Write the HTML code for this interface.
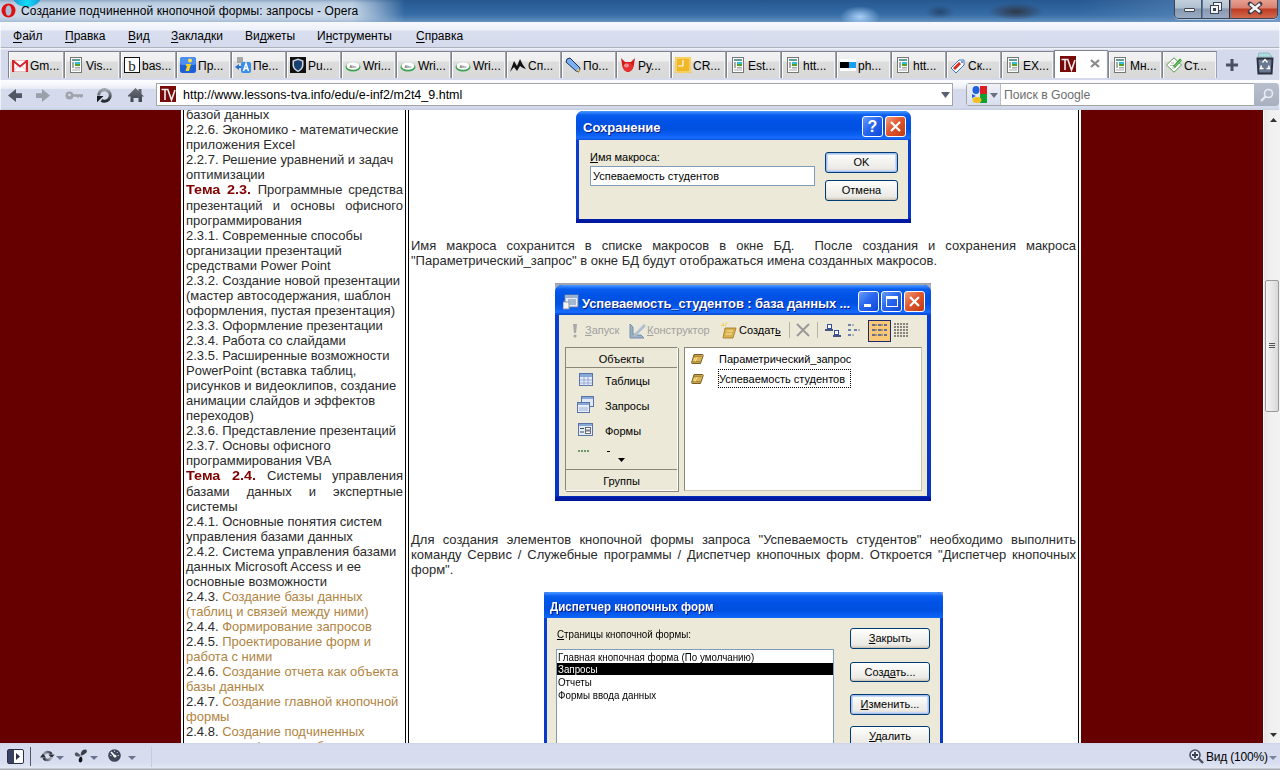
<!DOCTYPE html>
<html><head><meta charset="utf-8">
<style>
*{margin:0;padding:0;box-sizing:border-box}
html,body{width:1280px;height:770px;overflow:hidden;background:#fff;font-family:"Liberation Sans",sans-serif}
.a{position:absolute}
#title{left:0;top:0;width:1280px;height:22px;background:linear-gradient(#275890 0,#3066a0 10px,#386ea6 15px,#4a7cb0 18px,#5e8cbc 21px,#6a94c0 22px);overflow:hidden}
#menubar{left:0;top:22px;width:1280px;height:25px;background:linear-gradient(#f6f8fc 0,#eef1f9 8px,#d9dfef 9px,#d5dbec 25px)}
#menuline{left:0;top:47px;width:1280px;height:1px;background:#adb2bc}
#tabstrip{left:0;top:48px;width:1280px;height:32px;background:linear-gradient(#eef1f8 0,#eef1f8 1px,#d4daeb 2px,#d4daeb 32px)}
#addrrow{left:0;top:80px;width:1280px;height:25px;background:linear-gradient(#fdfdff 0,#f2f4fa 6px,#e8ecf6 8.5px,#d5dbec 9.5px,#d5dbec 25px)}
#addrline{left:0;top:22px;width:1280px;height:88px;border-left:1px solid rgba(255,255,255,.6);border-right:1px solid rgba(255,255,255,.6)}
#addrbot{left:0;top:105px;width:1280px;height:5px;background:linear-gradient(#d5dbec 0,#d3daec 3px,#c9d0e2 4px)}
.menu{font-size:12px;color:#000;top:7px;white-space:nowrap}
.menu u{text-decoration:underline;text-underline-offset:2px}
.tab{top:51px;height:27px;border-left:1px solid #7d828c;border-right:1px solid #a0a4ae;border-top:1px solid #7d828c;background:linear-gradient(#f3f3f3 0,#eeeeee 9px,#dddddd 10px,#d8d8d8 26px);font-size:12px;color:#000;box-shadow:inset 1px 0 0 #fff, inset -1px 0 0 #f4f4f4}
.tab.act{background:#fff;top:50px;height:28px}
.tab span{position:absolute;left:21px;top:7px;white-space:nowrap}
.tic{position:absolute;left:3px;top:5px;width:16px;height:16px}
.tic svg{display:block}
#content{left:0;top:110px;width:1263px;height:633px;background:#fff;overflow:hidden}
.maroon{background:#660000}
.side{left:186px;width:217px;font-size:13px;line-height:15px;color:#2a2a2a;white-space:nowrap}
.j{text-align:justify;text-align-last:justify}
.lk{color:#b0843f}
.tm{display:inline-block;color:#800000;font-weight:bold;font-size:12px;transform:scaleX(1.2);transform-origin:0 50%;text-align:left;text-align-last:left}
.para{left:411px;width:665px;font-size:13px;line-height:15px;color:#2a2a2a;white-space:nowrap}
#status{left:0;top:743px;width:1280px;height:27px;background:linear-gradient(#cdd4e8 0,#d6dcee 2px,#d8def0 20px,#e4e8f4 25px,#a8acb4 26px)}
#scroll{left:1264px;top:110px;width:16px;height:633px;background:linear-gradient(90deg,#e6e6e6,#f0f0f0 40%,#f2f2f2)}
.xpwin{overflow:hidden;background:linear-gradient(0deg,#00149a 0,#001ca8 4px,#0636c8 5px,#0a40d4 100%)}
.xptitle{background:linear-gradient(#4a9aff 0,#2a7cfc 2px,#0a5eee 4px,#0053e6 10px,#0050e0 18px,#0a60f4 24px,#1a6cfc 27px,#0a50dc 29px,#0a4ad8 100%)}
.xpclient{background:#ece9d8}
.xptt{font:bold 13px/15px "Liberation Sans",sans-serif;color:#fff;white-space:nowrap;text-shadow:1px 1px 0 #0a1a80}
.xptxt{font:11px/13px "Liberation Sans",sans-serif;color:#000;white-space:nowrap}
.xptxt.dis{color:#a0a0a0}
.xpedit{background:#fff;border:1px solid #7f9db9}
.xpbtn{border:1px solid #003c74;border-radius:3px;background:linear-gradient(#fff 0,#f4f4f0 40%,#ecebe6 80%,#d8d4c8 100%);font:11px "Liberation Sans",sans-serif;text-align:center;color:#000;box-shadow:inset 0 -1px 1px #c8c4b4}
.xpbtn.foc{box-shadow:inset 0 0 0 1px #a8c0f0,inset 0 0 0 2px #c8d8f8}
.xpclose{border:1px solid #fff;border-radius:3px;background:linear-gradient(135deg,#f0a080,#e05830 45%,#c03810)}
.xpblue{border:1px solid #fff;border-radius:3px;background:linear-gradient(135deg,#6a9cf8,#2a68f0 45%,#1048d8)}
.sx{transform:scaleX(0.89);transform-origin:0 0}

</style></head><body>

<div id="title" class="a">
 <div class="a" style="left:0;top:0;width:420px;height:22px;background:linear-gradient(#90a8c6 0,#b8cce0 3px,#c4d4e6 7px,#c8d7e7 16px,#b8cadf 20px,#a4bad2 22px);-webkit-mask-image:linear-gradient(90deg,#000 0,#000 352px,rgba(0,0,0,.6) 375px,rgba(0,0,0,0) 405px);mask-image:linear-gradient(90deg,#000 0,#000 352px,rgba(0,0,0,.6) 375px,rgba(0,0,0,0) 405px)"></div>
 <div class="a" style="left:12px;top:-19px;width:30px;height:26px;border-radius:50%;background:radial-gradient(circle at 50% 85%,#10e0f8,#1aa0d8 45%,#1a78b8 85%,#1a5888)"></div>
 <div class="a" style="left:840px;top:6px;width:40px;height:22px;border-radius:50%;background:radial-gradient(#a8d0f8,rgba(120,170,230,0) 70%)"></div>
 <div class="a" style="left:1080px;top:0;width:200px;height:22px;background:linear-gradient(90deg,rgba(110,150,195,0),rgba(110,150,195,.55) 70%,rgba(120,160,200,.7))"></div>
 <div class="a" style="left:988px;top:3px;width:56px;height:17px;border-radius:50%;background:radial-gradient(#303848,rgba(40,55,80,0) 70%)"></div>
 <div class="a" style="left:925px;top:5px;width:30px;height:14px;border-radius:50%;background:radial-gradient(rgba(30,50,80,.6),rgba(40,55,80,0) 70%)"></div>
 <svg class="a" style="left:1px;top:3px" width="15" height="15"><ellipse cx="7.5" cy="7.5" rx="7" ry="7" fill="#e01010"/><ellipse cx="7.5" cy="7.5" rx="3" ry="5.2" fill="#a8c0d8"/></svg>
 <div class="a" style="left:21px;top:4px;font-size:12px;letter-spacing:0.1px;color:#000;white-space:nowrap">Создание подчиненной кнопочной формы: запросы - Opera</div>
 <div class="a" style="left:1174px;top:0;width:104px;height:19px;border:1px solid #3a4452;border-top:none;border-radius:0 0 5px 5px;overflow:hidden;box-shadow:0 1px 0 rgba(255,255,255,.5)">
  <div class="a" style="left:0;top:0;width:27px;height:18px;background:linear-gradient(#c4d0dc,#b0c0d0 8px,#8898b0 9px,#9aacc4 18px);border-right:1px solid #4a5462"></div>
  <div class="a" style="left:28px;top:0;width:27px;height:18px;background:linear-gradient(#c4d0dc,#b0c0d0 8px,#8898b0 9px,#9aacc4 18px);border-right:1px solid #5a1a10"></div>
  <div class="a" style="left:56px;top:0;width:48px;height:18px;background:linear-gradient(#e8a090,#d88070 8px,#c03a20 9px,#d06a50 18px)"></div>
  <div class="a" style="left:9px;top:8px;width:11px;height:4px;background:#f4f4f4;border:1px solid #3a4452;border-radius:1px"></div>
  <div class="a" style="left:38px;top:2px;width:9px;height:9px;background:#f4f4f4;border:1px solid #3a4452"></div>
  <div class="a" style="left:35px;top:5px;width:9px;height:9px;background:#f4f4f4;border:1px solid #3a4452"></div>
  <div class="a" style="left:38px;top:8px;width:3px;height:3px;background:#3a4452"></div>
  <svg class="a" style="left:72px;top:1px" width="16" height="14"><path d="M3 3 13 11M13 3 3 11" stroke="#3a3a48" stroke-width="4.6" stroke-linecap="round"/><path d="M3 3 13 11M13 3 3 11" stroke="#f4f4f4" stroke-width="2.6"/></svg>
 </div>
</div>
<div id="menubar" class="a">
 <div class="a menu" style="left:13px"><u>Ф</u>айл</div>
 <div class="a menu" style="left:65px"><u>П</u>равка</div>
 <div class="a menu" style="left:128px"><u>В</u>ид</div>
 <div class="a menu" style="left:171px"><u>З</u>акладки</div>
 <div class="a menu" style="left:245px">Ви<u>д</u>жеты</div>
 <div class="a menu" style="left:317px">И<u>н</u>струменты</div>
 <div class="a menu" style="left:416px"><u>С</u>правка</div>
</div>
<div id="menuline" class="a"></div>
<div id="tabstrip" class="a"></div>
<div class="a tab" style="left:8px;width:56px"><div class="tic"><svg width="16" height="16"><rect x="0.5" y="3.5" width="15" height="11" fill="#fff" stroke="#f0b0b0" stroke-width=".8"/><path d="M0 3h2.2v12H0zM13.8 3H16v12h-2.2z" fill="#d8242c"/><path d="M1 3.8 8 9.5 15 3.8" stroke="#d8242c" stroke-width="2" fill="none"/><path d="M2 13.5 6 9M14 13.5 10 9" stroke="#f4b0b0" stroke-width=".8"/></svg></div><span>Gm...</span></div>
<div class="a tab" style="left:64px;width:56px"><div class="tic"><svg width="16" height="16"><rect x="2.5" y="0.5" width="11" height="15" fill="#fff" stroke="#777"/><rect x="4" y="2" width="8" height="2" fill="#6a9a9a"/><rect x="4" y="5" width="2" height="6" fill="#aaa"/><rect x="7" y="5" width="5" height="3" fill="#2ec0e0"/><rect x="7" y="7" width="5" height="2" fill="#5aa020"/><rect x="7" y="10" width="5" height="1.5" fill="#aaa"/><rect x="4" y="12.5" width="8" height="1" fill="#aaa"/></svg></div><span>Vis...</span></div>
<div class="a tab" style="left:120px;width:56px"><div class="tic"><svg width="16" height="16"><rect x="0.5" y="0.5" width="15" height="15" fill="#fff" stroke="#111"/><text x="8" y="13.5" font-family="Liberation Serif" font-size="15" text-anchor="middle" fill="#222">b</text></svg></div><span>bas...</span></div>
<div class="a tab" style="left:176px;width:55px"><div class="tic"><svg width="16" height="16"><rect x="0" y="0" width="16" height="16" rx="2.5" fill="#1d5fd6"/><rect x="0" y="0" width="16" height="8" rx="2.5" fill="#4d8ef0"/><circle cx="10" cy="3.5" r="2" fill="#ffe23a"/><path d="M6 7h5l-2 7H5.5l1.5-5H6z" fill="#ffd21a"/></svg></div><span>Пр...</span></div>
<div class="a tab" style="left:231px;width:55px"><div class="tic"><svg width="16" height="16"><rect x="2" y="0" width="6" height="6" fill="#8a8a8a" opacity=".7"/><path d="M0 10l4-3v2h4v2H4v2z" fill="#2a70d0"/><rect x="6" y="5" width="10" height="11" rx="2" fill="#3a8ee8"/><path d="M8.5 14 11 6.5 13.5 14M9.5 11.5h3" stroke="#fff" stroke-width="1.5" fill="none"/></svg></div><span>Пе...</span></div>
<div class="a tab" style="left:286px;width:55px"><div class="tic"><svg width="16" height="16"><rect width="16" height="16" fill="#111"/><path d="M8 1.5 13.5 3.5V8c0 3.5-2.5 5.5-5.5 7-3-1.5-5.5-3.5-5.5-7V3.5z" fill="#cfd8e0"/><path d="M8 3 12 4.5V8c0 2.6-1.8 4.2-4 5.4C5.8 12.2 4 10.6 4 8V4.5z" fill="#1a4070"/></svg></div><span>Pu...</span></div>
<div class="a tab" style="left:341px;width:55px"><div class="tic"><svg width="16" height="16"><ellipse cx="8" cy="10" rx="7.5" ry="4.5" fill="#3aa050"/><ellipse cx="8" cy="9" rx="6.5" ry="3.8" fill="#fff"/><text x="8" y="10.5" font-family="Liberation Sans" font-size="4" text-anchor="middle" fill="#555">Abc</text></svg></div><span>Wri...</span></div>
<div class="a tab" style="left:396px;width:55px"><div class="tic"><svg width="16" height="16"><ellipse cx="8" cy="10" rx="7.5" ry="4.5" fill="#3aa050"/><ellipse cx="8" cy="9" rx="6.5" ry="3.8" fill="#fff"/><text x="8" y="10.5" font-family="Liberation Sans" font-size="4" text-anchor="middle" fill="#555">Abc</text></svg></div><span>Wri...</span></div>
<div class="a tab" style="left:451px;width:55px"><div class="tic"><svg width="16" height="16"><ellipse cx="8" cy="10" rx="7.5" ry="4.5" fill="#3aa050"/><ellipse cx="8" cy="9" rx="6.5" ry="3.8" fill="#fff"/><text x="8" y="10.5" font-family="Liberation Sans" font-size="4" text-anchor="middle" fill="#555">Abc</text></svg></div><span>Wri...</span></div>
<div class="a tab" style="left:506px;width:55px"><div class="tic"><svg width="16" height="16"><path d="M0 15 4 4 7 9 10 2 13 8 16 12 13 11 10 9 7 14 4 10z" fill="#111"/></svg></div><span>Сп...</span></div>
<div class="a tab" style="left:561px;width:55px"><div class="tic"><svg width="16" height="16"><path d="M2 2l3-1 10 10-1 4-3-1L1 5z" fill="#7ab0f0" stroke="#1a3060" stroke-width="1"/><path d="M11 14l4 1-1-4z" fill="#e8c070"/></svg></div><span>По...</span></div>
<div class="a tab" style="left:616px;width:55px"><div class="tic"><svg width="16" height="16"><path d="M1 1l4 4h6l4-4-1 6c0 4-3 8-6 8S2 11 2 7z" fill="#d01818"/><ellipse cx="8" cy="10" rx="5" ry="4.5" fill="#e83030"/><ellipse cx="6.5" cy="8.5" rx="2.5" ry="2" fill="#fff" opacity=".45"/></svg></div><span>Ру...</span></div>
<div class="a tab" style="left:671px;width:55px"><div class="tic"><svg width="16" height="16"><rect width="16" height="16" fill="#f0b828"/><rect x="1" y="1" width="14" height="14" fill="none" stroke="#fff2b0" stroke-width=".8"/><path d="M8 3v6M3 9h5" stroke="#fff" stroke-width="1.2" fill="none"/></svg></div><span>CR...</span></div>
<div class="a tab" style="left:726px;width:55px"><div class="tic"><svg width="16" height="16"><rect x="2.5" y="0.5" width="11" height="15" fill="#fff" stroke="#777"/><rect x="4" y="2" width="8" height="2" fill="#6a9a9a"/><rect x="4" y="5" width="2" height="6" fill="#aaa"/><rect x="7" y="5" width="5" height="3" fill="#2ec0e0"/><rect x="7" y="7" width="5" height="2" fill="#5aa020"/><rect x="7" y="10" width="5" height="1.5" fill="#aaa"/><rect x="4" y="12.5" width="8" height="1" fill="#aaa"/></svg></div><span>Est...</span></div>
<div class="a tab" style="left:781px;width:55px"><div class="tic"><svg width="16" height="16"><rect x="2.5" y="0.5" width="11" height="15" fill="#fff" stroke="#777"/><rect x="4" y="2" width="8" height="2" fill="#6a9a9a"/><rect x="4" y="5" width="2" height="6" fill="#aaa"/><rect x="7" y="5" width="5" height="3" fill="#2ec0e0"/><rect x="7" y="7" width="5" height="2" fill="#5aa020"/><rect x="7" y="10" width="5" height="1.5" fill="#aaa"/><rect x="4" y="12.5" width="8" height="1" fill="#aaa"/></svg></div><span>htt...</span></div>
<div class="a tab" style="left:836px;width:55px"><div class="tic"><svg width="16" height="16"><rect x="0" y="2" width="16" height="12" fill="#fff"/><rect x="0" y="5" width="9" height="6" fill="#000"/><rect x="9" y="5" width="7" height="6" fill="#1aa0f0"/></svg></div><span>ph...</span></div>
<div class="a tab" style="left:891px;width:55px"><div class="tic"><svg width="16" height="16"><rect x="2.5" y="0.5" width="11" height="15" fill="#fff" stroke="#777"/><rect x="4" y="2" width="8" height="2" fill="#6a9a9a"/><rect x="4" y="5" width="2" height="6" fill="#aaa"/><rect x="7" y="5" width="5" height="3" fill="#2ec0e0"/><rect x="7" y="7" width="5" height="2" fill="#5aa020"/><rect x="7" y="10" width="5" height="1.5" fill="#aaa"/><rect x="4" y="12.5" width="8" height="1" fill="#aaa"/></svg></div><span>htt...</span></div>
<div class="a tab" style="left:946px;width:55px"><div class="tic"><svg width="16" height="16"><path d="M1 11 9 3h5v5l-8 8z" fill="#fff" stroke="#3a78c8" stroke-width="1"/><path d="M3 11l6-6 2 2-6 6z" fill="#d82a1a"/><circle cx="12" cy="5" r="1" fill="#3a78c8"/></svg></div><span>Ск...</span></div>
<div class="a tab" style="left:1001px;width:53px"><div class="tic"><svg width="16" height="16"><rect x="2.5" y="0.5" width="11" height="15" fill="#fff" stroke="#777"/><rect x="4" y="2" width="8" height="2" fill="#6a9a9a"/><rect x="4" y="5" width="2" height="6" fill="#aaa"/><rect x="7" y="5" width="5" height="3" fill="#2ec0e0"/><rect x="7" y="7" width="5" height="2" fill="#5aa020"/><rect x="7" y="10" width="5" height="1.5" fill="#aaa"/><rect x="4" y="12.5" width="8" height="1" fill="#aaa"/></svg></div><span>EX...</span></div>
<div class="a tab act" style="left:1054px;width:54px"><div class="tic" style="left:5px"><svg width="16" height="16"><rect width="16" height="16" fill="#7a0a0a"/><path d="M1.5 3.5h7M5 3.5V14M8 4l3.5 10L15 4" stroke="#eee" stroke-width="1.6" fill="none"/></svg></div><svg class="a" style="left:35px;top:8px" width="10" height="9"><path d="M1 1 9 8M9 1 1 8" stroke="#8a8a8a" stroke-width="2.3"/></svg></div>
<div class="a tab" style="left:1108px;width:54px"><div class="tic"><svg width="16" height="16"><rect x="2.5" y="0.5" width="11" height="15" fill="#fff" stroke="#777"/><rect x="4" y="2" width="8" height="2" fill="#6a9a9a"/><rect x="4" y="5" width="2" height="6" fill="#aaa"/><rect x="7" y="5" width="5" height="3" fill="#2ec0e0"/><rect x="7" y="7" width="5" height="2" fill="#5aa020"/><rect x="7" y="10" width="5" height="1.5" fill="#aaa"/><rect x="4" y="12.5" width="8" height="1" fill="#aaa"/></svg></div><span>Мн...</span></div>
<div class="a tab" style="left:1162px;width:55px"><div class="tic"><svg width="16" height="16"><path d="M0.5 8 8 0.8 15.5 8 8 15.2z" fill="#fff" stroke="#5a9a50" stroke-width="1"/><path d="M4 8.5h4M5 6h3M6 11h3" stroke="#8aa080" stroke-width=".7"/><path d="M8 10 15 2.5" stroke="#2a8a30" stroke-width="2.6"/><path d="M8.5 9.5 15 3" stroke="#70d060" stroke-width="1.2"/></svg></div><span>Ст...</span></div>
<svg class="a" style="left:1226px;top:59px" width="12" height="12"><path d="M4.5 0h3v12h-3zM0 4.5h12v3H0z" fill="#4c5060"/></svg>
<svg class="a" style="left:1255px;top:52px" width="20" height="24"><path d="M4 1h10l3 4H3z" fill="#a8e0e0" stroke="#80a0a8" stroke-width=".6"/><path d="M1.5 5.5h17l-1 17h-15z" fill="#2a303c"/><path d="M3.5 7.5h13l-.8 13H4.3z" fill="#6a7890"/><path d="M7.5 10.5 10 7.5l2.5 3M13.5 13.5l1 3h-3M6.5 13.5l-1 3h3" stroke="#fff" stroke-width="1.4" fill="none"/></svg>
<div id="addrrow" class="a"></div>
<div id="addrbot" class="a"></div>
<svg class="a" style="left:8px;top:89px" width="15" height="14"><path d="M0 6.5 8 0v4.2h6v4.8H8V13z" fill="#535763"/></svg>
<svg class="a" style="left:36px;top:89px" width="15" height="14"><path d="M14 6.5 6 0v4.2H0v4.8h6V13z" fill="#9b9fa9"/></svg>
<svg class="a" style="left:65px;top:91px" width="19" height="10"><circle cx="4.5" cy="4.5" r="4" fill="#a0a3aa"/><circle cx="4.5" cy="4" r="1.3" fill="#d5dbec"/><path d="M8 3.2h10v2.6h-1l-1 1.5-1-1.5h-1l-1 1.5-1-1.5H8z" fill="#a0a3aa"/></svg>
<svg class="a" style="left:96px;top:88px" width="17" height="16"><defs><linearGradient id="rg" x1="0" y1="0" x2="0" y2="1"><stop offset="0" stop-color="#a0a4ae"/><stop offset="1" stop-color="#22262e"/></linearGradient></defs><path d="M2.6 7.4A5.8 5.8 0 1 1 5.4 12.4" stroke="url(#rg)" stroke-width="3" fill="none"/><path d="M1 8h6.5L1 14.2z" fill="#15181e"/></svg>
<svg class="a" style="left:128px;top:88px" width="16" height="14"><defs><linearGradient id="hg" x1="0" y1="0" x2="0" y2="1"><stop offset="0" stop-color="#6a6e78"/><stop offset="1" stop-color="#40444e"/></linearGradient></defs><path d="M0 7.5 7.5 0l3 3V1h3v5l2.5 2.5h-2V14H10.5v-4h-5v4H2.5V8.5H0z" fill="url(#hg)"/></svg>
<div class="a" style="left:156px;top:83px;width:797px;height:23px;background:#fff;border:1px solid #a5a5a5">
 <div class="tic" style="left:3px;top:2px"><svg width="16" height="16"><rect width="16" height="16" fill="#7a0a0a"/><path d="M1.5 3.5h7M5 3.5V14M8 4l3.5 10L15 4" stroke="#eee" stroke-width="1.6" fill="none"/></svg></div>
 <div class="a" style="left:26px;top:4px;font-size:12.5px;color:#000;white-space:nowrap">http://www.lessons-tva.info/edu/e-inf2/m2t4_9.html</div>
 <svg class="a" style="left:784px;top:8px" width="9" height="6"><path d="M0 0h9L4.5 6z" fill="#5a6070"/></svg>
</div>
<div class="a" style="left:966px;top:83px;width:289px;height:23px;background:#fff;border:1px solid #a5a5a5;border-radius:3px 0 0 3px">
 <div class="a" style="left:0;top:0;width:34px;height:21px;background:linear-gradient(#f0f2f8,#d8deee);border-right:1px solid #b8bcc8"></div>
 <svg class="a" style="left:4px;top:1px" width="18" height="19"><path d="M9 1h7v10H9z" fill="#e02020"/><path d="M9 9h7v9H9z" fill="#10a030"/><ellipse cx="5" cy="5" rx="3.5" ry="4" fill="#2060e0"/><ellipse cx="6" cy="15" rx="4.5" ry="3" fill="#f0c020"/><path d="M1 9l4 2-4 2z" fill="#2060e0"/></svg>
 <svg class="a" style="left:23px;top:9px" width="8" height="5"><path d="M0 0h8L4 5z" fill="#6a7080"/></svg>
 <div class="a" style="left:37px;top:4px;font-size:12.2px;color:#6d6d6d;white-space:nowrap">Поиск в Google</div>
</div>
<div class="a" style="left:1254px;top:83px;width:25px;height:23px;background:linear-gradient(#b8bfcc,#a8b0c0);border-radius:0 4px 4px 0">
 <svg class="a" style="left:6px;top:5px" width="14" height="14"><circle cx="8.5" cy="5.5" r="4" stroke="#e8ecf4" stroke-width="1.6" fill="none"/><path d="M5.5 8.5 1 13" stroke="#e8ecf4" stroke-width="2.2"/></svg>
</div>
<div id="addrline" class="a"></div>
<div id="status" class="a">
 <svg class="a" style="left:7px;top:6px" width="17" height="15"><rect x="0.5" y="0.5" width="16" height="14" rx="1.5" fill="#fff" stroke="#2a3048"/><rect x="1" y="1" width="6" height="13" fill="#3a4060"/><path d="M9 4v7l4-3.5z" fill="#2a3048"/></svg>
 <div class="a" style="left:30px;top:4px;width:1px;height:19px;background:#50586a"></div>
 <svg class="a" style="left:39px;top:6px" width="17" height="14"><defs><linearGradient id="sg1" x1="0" y1="0" x2="1" y2="0"><stop offset="0" stop-color="#a8acb8"/><stop offset="1" stop-color="#2a2e3a"/></linearGradient><linearGradient id="sg2" x1="1" y1="0" x2="0" y2="0"><stop offset="0" stop-color="#b0b4c0"/><stop offset="1" stop-color="#2a2e3a"/></linearGradient></defs><path d="M4.5 6A4.5 4.5 0 0 1 12.5 5" stroke="url(#sg1)" stroke-width="2.6" fill="none"/><path d="M9.5 5.5h6l-3 4z" fill="#2a2e3a"/><path d="M12.5 8A4.5 4.5 0 0 1 4.5 9" stroke="url(#sg2)" stroke-width="2.6" fill="none"/><path d="M1 8.5h6l-3-4z" fill="#2a2e3a"/></svg>
 <svg class="a" style="left:56px;top:13px" width="8" height="5"><path d="M0 0h8L4 4z" fill="#6a7490"/></svg>
 <svg class="a" style="left:74px;top:6px" width="14" height="14"><path d="M7 7C6 4 8 0.5 11 0.5c2 0 2.5 2 1 3.5C11 5 9 6 7 7z" fill="#3a3e48"/><path d="M7 7C5 8 1.5 8 0.8 5.5 0.5 3.5 2.5 3 4 4c1 .8 2.5 2 3 3z" fill="#50545e"/><path d="M7 7c1.5 1.5 2 4.5 0.5 6-1.5 1-3 0-2.8-2C4.8 9.5 6 8 7 7z" fill="#101218"/><circle cx="7" cy="7" r="1.3" fill="#9aa0ac"/></svg>
 <svg class="a" style="left:90px;top:13px" width="8" height="5"><path d="M0 0h8L4 4z" fill="#6a7490"/></svg>
 <svg class="a" style="left:108px;top:6px" width="13" height="13"><circle cx="6.5" cy="6.5" r="6.3" fill="#3e4658"/><path d="M6.5 1.5v1.5M2 6.5h1.5M11 6.5H9.5M9.8 3l-1 1" stroke="#b8c0d0" stroke-width="1"/><path d="M3 3l4.2 4.6" stroke="#fff" stroke-width="1.6"/><circle cx="7" cy="7.2" r="1.4" fill="#fff"/></svg>
 <svg class="a" style="left:128px;top:13px" width="8" height="5"><path d="M0 0h8L4 4z" fill="#6a7490"/></svg>
 <div class="a" style="left:151px;top:3px;width:1px;height:21px;background:#c8ccd8"></div>
 <svg class="a" style="left:1189px;top:6px" width="15" height="15"><circle cx="6" cy="6" r="5" fill="#e8ecf4" stroke="#4a5264" stroke-width="1.6"/><path d="M6 3v6M3 6h6" stroke="#3a4254" stroke-width="1.8"/><path d="M9.5 9.5 14 14" stroke="#4a5264" stroke-width="2.4"/></svg>
 <div class="a" style="left:1206px;top:7px;font-size:12px;letter-spacing:-0.2px;color:#000;white-space:nowrap">Вид (100%)</div>
 <svg class="a" style="left:1269px;top:13px" width="8" height="5"><path d="M0 0h8L4 4z" fill="#7a84a0"/></svg>
</div>
<div id="scroll" class="a">
 <svg class="a" style="left:6px;top:8px" width="7" height="4"><path d="M0 4 3.5 0 7 4z" fill="#333"/></svg>
 <div class="a" style="left:1px;top:170px;width:14px;height:132px;border:1px solid #9a9a9a;border-radius:2px;background:linear-gradient(90deg,#f4f4f4,#e8e8e8 50%,#d8d8d8)"></div>
 <div class="a" style="left:5px;top:233px;width:6px;height:1px;background:#555;box-shadow:0 2px 0 #555,0 4px 0 #555"></div>
 <svg class="a" style="left:6px;top:623px" width="7" height="4"><path d="M0 0h7L3.5 4z" fill="#333"/></svg>
</div>

<div id="content" class="a">
<div class="a maroon" style="left:0;top:0;width:181px;height:633px"></div>
<div class="a" style="left:183px;top:0;width:1px;height:633px;background:#000"></div>
<div class="a" style="left:405px;top:0;width:1px;height:633px;background:#000"></div>
<div class="a" style="left:408px;top:0;width:1px;height:633px;background:#000"></div>
<div class="a" style="left:1078px;top:0;width:1px;height:633px;background:#000"></div>
<div class="a maroon" style="left:1081px;top:0;width:182px;height:633px"></div>
<div class="a side" style="top:-3px">базой данных</div>
<div class="a side" style="top:12px">2.2.6. Экономико - математические</div>
<div class="a side" style="top:27px">приложения Excel</div>
<div class="a side" style="top:42px">2.2.7. Решение уравнений и задач</div>
<div class="a side" style="top:57px">оптимизации</div>
<div class="a side j" style="top:72px"><b class="tm" style="width:35px">Тема</b> <b class="tm" style="width:25px">2.3.</b> Программные средства</div>
<div class="a side j" style="top:88px">презентаций и основы офисного</div>
<div class="a side" style="top:103px">программирования</div>
<div class="a side" style="top:118px">2.3.1. Современные способы</div>
<div class="a side" style="top:133px">организации презентаций</div>
<div class="a side" style="top:148px">средствами Power Point</div>
<div class="a side" style="top:163px">2.3.2. Создание новой презентации</div>
<div class="a side" style="top:178px">(мастер автосодержания, шаблон</div>
<div class="a side" style="top:193px">оформления, пустая презентация)</div>
<div class="a side" style="top:208px">2.3.3. Оформление презентации</div>
<div class="a side" style="top:223px">2.3.4. Работа со слайдами</div>
<div class="a side" style="top:238px">2.3.5. Расширенные возможности</div>
<div class="a side" style="top:253px">PowerPoint (вставка таблиц,</div>
<div class="a side" style="top:268px">рисунков и видеоклипов, создание</div>
<div class="a side" style="top:283px">анимации слайдов и эффектов</div>
<div class="a side" style="top:298px">переходов)</div>
<div class="a side" style="top:313px">2.3.6. Представление презентаций</div>
<div class="a side" style="top:328px">2.3.7. Основы офисного</div>
<div class="a side" style="top:343px">программирования VBA</div>
<div class="a side j" style="top:358px"><b class="tm" style="width:35px">Тема</b> <b class="tm" style="width:25px">2.4.</b> Системы управления</div>
<div class="a side j" style="top:374px">базами данных и экспертные</div>
<div class="a side" style="top:389px">системы</div>
<div class="a side" style="top:404px">2.4.1. Основные понятия систем</div>
<div class="a side" style="top:419px">управления базами данных</div>
<div class="a side" style="top:434px">2.4.2. Система управления базами</div>
<div class="a side" style="top:449px">данных Microsoft Access и ее</div>
<div class="a side" style="top:464px">основные возможности</div>
<div class="a side" style="top:479px">2.4.3. <span class="lk">Создание базы данных</span></div>
<div class="a side" style="top:494px"><span class="lk">(таблиц и связей между ними)</span></div>
<div class="a side" style="top:509px">2.4.4. <span class="lk">Формирование запросов</span></div>
<div class="a side" style="top:524px">2.4.5. <span class="lk">Проектирование форм и</span></div>
<div class="a side" style="top:539px"><span class="lk">работа с ними</span></div>
<div class="a side" style="top:554px">2.4.6. <span class="lk">Создание отчета как объекта</span></div>
<div class="a side" style="top:569px"><span class="lk">базы данных</span></div>
<div class="a side" style="top:584px">2.4.7. <span class="lk">Создание главной кнопочной</span></div>
<div class="a side" style="top:599px"><span class="lk">формы</span></div>
<div class="a side" style="top:614px">2.4.8. <span class="lk">Создание подчиненных</span></div>
<div class="a side" style="top:629px"><span class="lk">кнопочных форм и работа с</span></div>
<div class="a para j" style="top:128px">Имя макроса сохранится в списке макросов в окне БД.&nbsp; После создания и сохранения макроса</div>
<div class="a para" style="top:143px">"Параметрический_запрос" в окне БД будут отображаться имена созданных макросов.</div>
<div class="a para j" style="top:422px">Для создания элементов кнопочной формы запроса "Успеваемость студентов" необходимо выполнить</div>
<div class="a para j" style="top:437px">команду Сервис / Служебные программы / Диспетчер кнопочных форм. Откроется "Диспетчер кнопочных</div>
<div class="a para" style="top:452px">форм".</div>
<div class="a xpwin" style="left:576px;top:1px;width:335px;height:112px;border-radius:7px 7px 0 0;">
<div class="a xptitle" style="left:0;top:0;width:335px;height:29px;border-radius:7px 7px 0 0"></div>
<div class="a xpclient" style="left:3px;top:29px;width:329px;height:79px"></div>

<div class="a xptt" style="left:7px;top:9px">Сохранение</div>
<div class="a xpblue" style="left:286px;top:5px;width:21px;height:21px"><div class="a" style="left:0;top:0;width:19px;text-align:center;font:bold 16px/19px 'Liberation Sans',sans-serif;color:#fff">?</div></div>
<div class="a xpclose" style="left:309px;top:5px;width:21px;height:21px"><svg width="21" height="21" style="position:absolute;left:-1px;top:-1px"><path d="M6 6 15 15M15 6 6 15" stroke="#fff" stroke-width="2.2"/></svg></div>
<div class="a xptxt" style="left:14px;top:40px"><u>И</u>мя макроса:</div>
<div class="a xpedit" style="left:14px;top:55px;width:225px;height:20px"><span class="a xptxt" style="left:2px;top:3px">Успеваемость студентов</span></div>
<div class="a xpbtn foc" style="left:249px;top:41px;width:73px;height:21px;line-height:19px">OK</div>
<div class="a xpbtn" style="left:249px;top:69px;width:73px;height:21px;line-height:19px">Отмена</div>
</div>
<div class="a" style="left:555px;top:173px;width:376px;height:8px;background:linear-gradient(#9a9aa4 0,#a8acb8 2px,#b0b8c8 8px)"></div>
<div class="a xpwin" style="left:555px;top:175px;width:376px;height:216px;border-radius:7px 7px 0 0;">
<div class="a xptitle" style="left:0;top:0;width:376px;height:30px;border-radius:7px 7px 0 0"></div>
<div class="a xpclient" style="left:4px;top:30px;width:368px;height:181px"></div>

<svg class="a" style="left:8px;top:9px" width="16" height="16"><rect x="2" y="1" width="13" height="12" fill="#e8eef8" stroke="#708098"/><rect x="2" y="1" width="13" height="3" fill="#9ab0d0"/><path d="M5 6h8M5 8h8M5 10h8" stroke="#6080a8"/><rect x="0" y="8" width="6" height="7" fill="#f4f4f4" stroke="#8898b0"/></svg>
<div class="a xptt" style="left:27px;top:11px;letter-spacing:-0.1px">Успеваемость_студентов : база данных ...</div>
<div class="a xpblue" style="left:303px;top:6px;width:21px;height:21px"><div class="a" style="left:5px;top:12px;width:7px;height:3px;background:#fff"></div></div>
<div class="a xpblue" style="left:326px;top:6px;width:21px;height:21px"><div class="a" style="left:4px;top:4px;width:12px;height:11px;border:1px solid #fff;border-top-width:3px"></div></div>
<div class="a xpclose" style="left:349px;top:6px;width:21px;height:21px"><svg width="21" height="21" style="position:absolute;left:-1px;top:-1px"><path d="M6 6 15 15M15 6 6 15" stroke="#fff" stroke-width="2.2"/></svg></div>
<svg class="a" style="left:16px;top:38px" width="8" height="16"><path d="M2 1h4l-1 9H3z" fill="#a8a8a8"/><circle cx="4" cy="13" r="1.6" fill="#a8a8a8"/></svg>
<div class="a xptxt dis" style="left:30px;top:39px"><u>З</u>апуск</div>
<svg class="a" style="left:74px;top:37px" width="18" height="17"><path d="M1 16V2l3 3v8h8l3 3z" fill="#9ab0c8" stroke="#7890a8"/><path d="M4 13 15 2l2 2L6 15z" fill="#b0c0d0"/><path d="M2 9l4 4" stroke="#8aa" /></svg>
<div class="a xptxt dis" style="left:92px;top:39px"><u>К</u>онструктор</div>
<svg class="a" style="left:166px;top:37px" width="18" height="17"><path d="M2 1l1 3M0 3l3 1M6 0 4 4" stroke="#f0d040" stroke-width="1"/><path d="M4 6h11l-3 10H2z" fill="#d8b050" stroke="#a07820" stroke-width=".8"/><path d="M6 9h6M5 12h6" stroke="#f8e8a0"/></svg>
<div class="a xptxt" style="left:184px;top:39px">Создат<u>ь</u></div>
<div class="a" style="left:234px;top:37px;width:1px;height:16px;background:#b8b4a4"></div>
<svg class="a" style="left:241px;top:38px" width="14" height="14"><path d="M1 1 13 13M13 1 1 13" stroke="#9a9a9a" stroke-width="2"/></svg>
<div class="a" style="left:262px;top:37px;width:1px;height:16px;background:#b8b4a4"></div>
<svg class="a" style="left:270px;top:39px" width="16" height="14"><rect x="2.5" y="0.5" width="4" height="4" fill="#fff" stroke="#3050a0"/><path d="M0 6h8" stroke="#102060" stroke-width="1.3"/><rect x="9.5" y="6.5" width="4" height="4" fill="#fff" stroke="#3050a0"/><path d="M8 12h8" stroke="#102060" stroke-width="1.3"/></svg>
<svg class="a" style="left:293px;top:39px" width="16" height="14"><path d="M0 1h3M0 6h3M6 6h3M0 11h3" stroke="#4060a0" stroke-width="1.4"/><path d="M4 1h2M10 6h2M4 11h2" stroke="#808080"/></svg>
<div class="a" style="left:313px;top:35px;width:23px;height:22px;background:#fbc878;border:1px solid #1a2a6a"></div>
<svg class="a" style="left:316px;top:38px" width="18" height="16"><path d="M1 2h3M7 2h3M13 2h3M1 7h3M7 7h3M13 7h3M1 12h3M7 12h3M13 12h3" stroke="#3050a0" stroke-width="1.6"/><path d="M4 2h2M10 2h2M4 7h2M10 7h2M4 12h2M10 12h2" stroke="#606060"/></svg>
<svg class="a" style="left:338px;top:38px" width="17" height="15"><path d="M1 1h15M1 4h15M1 7h15M1 10h15M1 13h15" stroke="#202020" stroke-width="1.2" stroke-dasharray="2 1"/></svg>

<div class="a" style="left:10px;top:62px;width:113px;height:144px;border:1px solid #8a8678;border-right-color:#fff;border-bottom-color:#fff;background:#ece9d8;box-shadow:1px 1px 0 #8a8678"></div>
<div class="a" style="left:11px;top:63px;width:111px;height:20px;border-bottom:1px solid #8a8678;text-align:center"><span class="xptxt" style="position:relative;top:1px">Объекты</span></div>
<div class="a" style="left:11px;top:184px;width:111px;height:21px;border-top:1px solid #8a8678;text-align:center"><span class="xptxt" style="position:relative;top:1px">Группы</span></div>
<svg class="a" style="left:24px;top:88px" width="14" height="13"><rect x="0.5" y="0.5" width="13" height="12" fill="#e4ecf8" stroke="#5a74a8"/><rect x="1" y="1" width="12" height="3" fill="#88a8d8"/><path d="M1 7h12M1 10h12M5 4v9M9 4v9" stroke="#8aa0c8" stroke-width=".8"/></svg>
<div class="a xptxt" style="left:50px;top:90px">Таблицы</div>
<svg class="a" style="left:22px;top:111px" width="17" height="17"><rect x="4.5" y="0.5" width="12" height="10" fill="#e0e8f4" stroke="#5a74a8"/><rect x="5" y="1" width="11" height="2" fill="#88a8d8"/><rect x="0.5" y="6.5" width="12" height="10" fill="#e8eef8" stroke="#5a74a8"/><rect x="1" y="7" width="11" height="2" fill="#88a8d8"/><path d="M2 12h9M2 14h9" stroke="#8aa0c8" stroke-width=".8"/></svg>
<div class="a xptxt" style="left:50px;top:115px">Запросы</div>
<svg class="a" style="left:23px;top:138px" width="15" height="13"><rect x="0.5" y="0.5" width="14" height="12" fill="#e4ecf8" stroke="#5a74a8"/><rect x="1" y="1" width="13" height="2" fill="#88a8d8"/><path d="M2 5.5h4M2 9h4" stroke="#404850" stroke-width="1"/><rect x="7.5" y="4.5" width="5" height="2.5" fill="#fff" stroke="#404850" stroke-width=".8"/><rect x="7.5" y="8" width="5" height="2.5" fill="#fff" stroke="#404850" stroke-width=".8"/></svg>
<div class="a xptxt" style="left:50px;top:140px">Формы</div>
<svg class="a" style="left:23px;top:164px" width="12" height="4"><path d="M0 2h12" stroke="#6a9a6a" stroke-width="2" stroke-dasharray="2 1"/></svg>
<div class="a" style="left:52px;top:166px;width:3px;height:1px;background:#000"></div>
<svg class="a" style="left:63px;top:173px" width="7" height="4"><path d="M0 0h7L3.5 4z" fill="#000"/></svg>

<div class="a" style="left:129px;top:62px;width:238px;height:144px;background:#fff;border:1px solid #8a8678;border-right-color:#c8c4b4;border-bottom-color:#c8c4b4"></div>
<svg class="a" style="left:136px;top:68px" width="13" height="12"><path d="M3 1.5h8.5c.8 0 1 .8.6 1.4L9.5 10.5H1.2c-.6 0-.8-.6-.5-1.2z" fill="#dcb450" stroke="#6a5020" stroke-width=".9"/><path d="M2.5 3.2h8M1.5 8.8h8" stroke="#7a5a20" stroke-width=".7"/><path d="M4 5l-1.5 3M6 4.5l-2 4" stroke="#f8e8a0" stroke-width="1"/></svg>
<div class="a xptxt" style="left:164px;top:68px">Параметрический_запрос</div>
<svg class="a" style="left:136px;top:88px" width="13" height="12"><path d="M3 1.5h8.5c.8 0 1 .8.6 1.4L9.5 10.5H1.2c-.6 0-.8-.6-.5-1.2z" fill="#dcb450" stroke="#6a5020" stroke-width=".9"/><path d="M2.5 3.2h8M1.5 8.8h8" stroke="#7a5a20" stroke-width=".7"/><path d="M4 5l-1.5 3M6 4.5l-2 4" stroke="#f8e8a0" stroke-width="1"/></svg>
<div class="a" style="left:163px;top:84px;width:133px;height:19px;border:1px dotted #000"></div>
<div class="a xptxt" style="left:164px;top:88px">Успеваемость студентов</div>

</div>
<div class="a" style="left:544px;top:482px;width:399px;height:6px;background:#7090e0"></div>
<div class="a xpwin" style="left:544px;top:482px;width:399px;height:208px;border-radius:4px 6px 0 0;">
<div class="a xptitle" style="left:0;top:0;width:399px;height:26px;border-radius:4px 6px 0 0"></div>
<div class="a xpclient" style="left:3px;top:26px;width:393px;height:179px"></div>

<div class="a xptt sx" style="left:6px;top:7px">Диспетчер кнопочных форм</div>
<div class="a xptxt sx" style="left:13px;top:36px"><u>С</u>траницы кнопочной формы:</div>
<div class="a" style="left:12px;top:57px;width:278px;height:150px;background:#fff;border:1px solid #7f9db9"></div>
<div class="a xptxt sx" style="left:14px;top:59px">Главная кнопочная форма (По умолчанию)</div>
<div class="a" style="left:13px;top:71px;width:276px;height:12px;background:#000"></div>
<div class="a xptxt sx" style="left:14px;top:71px;color:#fff">Запросы</div>
<div class="a xptxt sx" style="left:14px;top:84px">Отчеты</div>
<div class="a xptxt sx" style="left:14px;top:97px">Формы ввода данных</div>

<div class="a xpbtn" style="left:306px;top:36px;width:80px;height:21px;line-height:19px"><u>З</u>акрыть</div>
<div class="a xpbtn" style="left:306px;top:70px;width:80px;height:20px;line-height:18px">Созд<u>а</u>ть...</div>
<div class="a xpbtn foc" style="left:306px;top:102px;width:80px;height:21px;line-height:19px"><u>И</u>зменить...</div>
<div class="a xpbtn" style="left:306px;top:134px;width:80px;height:21px;line-height:19px"><u>У</u>далить</div>
</div>
</div>
</body></html>
